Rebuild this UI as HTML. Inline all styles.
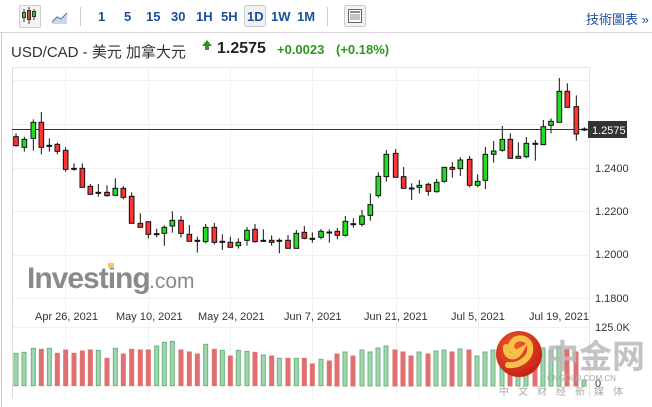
<!DOCTYPE html>
<html><head><meta charset="utf-8"><style>
body{margin:0;width:652px;height:407px;overflow:hidden;background:#fff;font-family:"Liberation Sans","Noto Sans CJK TC",sans-serif;position:relative}
.a{position:absolute;white-space:nowrap}
.tb{font-size:13px;font-weight:bold;color:#1a4f9c;top:9px}
</style></head><body>
<div class="a" style="left:0;top:0;width:652px;height:32px;border-bottom:1px solid #d6d6d6"></div>
<div class="a" style="left:19px;top:5px;width:20px;height:21px;border:1px solid #ccc;border-radius:2px;background:#f4f4f4"></div>
<svg class="a" style="left:0;top:0" width="652" height="32">
<g stroke="#333" stroke-width="1"><line x1="24" y1="9" x2="24" y2="22"/><line x1="29" y1="7" x2="29" y2="24"/><line x1="34" y1="9" x2="34" y2="20"/></g>
<rect x="22.5" y="12.5" width="3" height="5" fill="#3c3" stroke="#333"/><rect x="27.5" y="10.5" width="3" height="9" fill="#e33" stroke="#333"/><rect x="32.5" y="11.5" width="3" height="5" fill="#3c3" stroke="#333"/>
<path d="M52 22 L57 17 L61 19 L67 13 L67 24 L52 24Z" fill="#c9d6e8"/><path d="M52 22 L57 17 L61 19 L67 13" fill="none" stroke="#5b7fb8" stroke-width="1.2"/>
<line x1="80.5" y1="7" x2="80.5" y2="26" stroke="#ccc"/><line x1="327.5" y1="7" x2="327.5" y2="26" stroke="#ccc"/>
<rect x="244.5" y="5.5" width="21" height="21" fill="#f2f2f2" stroke="#ccc" rx="2"/>
<rect x="344.5" y="5.5" width="21" height="21" fill="#f4f4f4" stroke="#ccc" rx="2"/>
<rect x="348.5" y="9.5" width="13" height="13" fill="#fff" stroke="#666"/><line x1="350" y1="12" x2="360" y2="12" stroke="#666" stroke-width="1.5"/><g stroke="#888"><line x1="350" y1="15" x2="360" y2="15"/><line x1="350" y1="17" x2="360" y2="17"/><line x1="350" y1="19" x2="360" y2="19"/></g>
</svg>
<div class="a tb" style="left:98px">1</div><div class="a tb" style="left:124px">5</div><div class="a tb" style="left:146px">15</div><div class="a tb" style="left:171px">30</div><div class="a tb" style="left:196px">1H</div><div class="a tb" style="left:221px">5H</div><div class="a tb" style="left:247px">1D</div><div class="a tb" style="left:271px">1W</div><div class="a tb" style="left:297px">1M</div>
<div class="a" style="left:586px;top:9px;font-size:13px;color:#1a4f9c">技術圖表 »</div>
<div class="a" style="left:11px;top:41px;font-size:15px;color:#333">USD/CAD - 美元 加拿大元</div>
<svg class="a" style="left:202px;top:40px" width="10" height="10"><path d="M5 0 L10 6 L7 6 L7 10 L3 10 L3 6 L0 6Z" fill="#2a9a1a"/></svg>
<div class="a" style="left:217px;top:40px;font-size:16px;font-weight:bold;color:#222">1.2575</div>
<div class="a" style="left:277px;top:42px;font-size:13px;font-weight:bold;color:#2a9a1a">+0.0023</div>
<div class="a" style="left:336px;top:42px;font-size:13px;font-weight:bold;color:#2a9a1a">(+0.18%)</div>
<svg class="a" style="left:0;top:0" width="652" height="407">
<g stroke="#f1f1f1" stroke-width="1">
<line x1="12" y1="80.5" x2="589" y2="80.5"/><line x1="12" y1="124.5" x2="589" y2="124.5"/><line x1="12" y1="168.5" x2="589" y2="168.5"/><line x1="12" y1="211.5" x2="589" y2="211.5"/><line x1="12" y1="255.5" x2="589" y2="255.5"/><line x1="12" y1="298.5" x2="589" y2="298.5"/><line x1="12" y1="327.5" x2="589" y2="327.5"/>
<line x1="65.5" y1="68" x2="65.5" y2="398"/><line x1="148.5" y1="68" x2="148.5" y2="398"/><line x1="230.5" y1="68" x2="230.5" y2="398"/><line x1="312.5" y1="68" x2="312.5" y2="398"/><line x1="396.5" y1="68" x2="396.5" y2="398"/><line x1="478.5" y1="68" x2="478.5" y2="398"/>
</g>
<line x1="12" y1="67.5" x2="589" y2="67.5" stroke="#e4e4e4"/>
<line x1="12.5" y1="67" x2="12.5" y2="398" stroke="#ddd"/>
<line x1="589.5" y1="67" x2="589.5" y2="398" stroke="#e4e4e4"/>
<line x1="1.5" y1="32" x2="1.5" y2="407" stroke="#ccc"/>
<text x="27" y="288" font-family="Liberation Sans,sans-serif" font-size="30" font-weight="bold" fill="#8a8a8a" letter-spacing="-1">Investing</text>
<text x="149" y="288" font-family="Liberation Sans,sans-serif" font-size="21" fill="#8a8a8a">.com</text>
<rect x="108" y="263" width="6" height="5" fill="#f5c56b"/>
<line x1="12" y1="129.5" x2="589" y2="129.5" stroke="#333"/>
<g transform="translate(0,70) scale(0.33333)" stroke="#111" stroke-width="3">
<line x1="48" y1="190" x2="48" y2="230"/><rect x="41" y="200" width="14" height="27" fill="#f33"/>
<line x1="73" y1="200" x2="73" y2="245"/><rect x="66" y="208" width="14" height="24" fill="#2d2"/>
<line x1="100" y1="148" x2="100" y2="242"/><rect x="93" y="157" width="14" height="48" fill="#2d2"/>
<line x1="124" y1="126" x2="124" y2="253"/><rect x="117" y="157" width="14" height="75" fill="#f33"/>
<line x1="148" y1="205" x2="148" y2="245"/><rect x="141" y="226" width="14" height="3" fill="#111"/>
<line x1="172" y1="218" x2="172" y2="253"/><rect x="165" y="223" width="14" height="21" fill="#f33"/>
<line x1="197" y1="232" x2="197" y2="305"/><rect x="190" y="241" width="14" height="57" fill="#f33"/>
<line x1="222" y1="280" x2="222" y2="302"/><rect x="215" y="295" width="14" height="3" fill="#111"/>
<line x1="247" y1="280" x2="247" y2="352"/><rect x="240" y="295" width="14" height="57" fill="#f33"/>
<line x1="271" y1="342" x2="271" y2="373"/><rect x="264" y="349" width="14" height="24" fill="#f33"/>
<line x1="295" y1="342" x2="295" y2="380"/><rect x="288" y="367" width="14" height="3" fill="#111"/>
<line x1="321" y1="346" x2="321" y2="380"/><rect x="314" y="367" width="14" height="10" fill="#f33"/>
<line x1="346" y1="325" x2="346" y2="376"/><rect x="339" y="355" width="14" height="21" fill="#2d2"/>
<line x1="370" y1="348" x2="370" y2="388"/><rect x="363" y="355" width="14" height="27" fill="#f33"/>
<line x1="395" y1="367" x2="395" y2="460"/><rect x="388" y="379" width="14" height="81" fill="#f33"/>
<line x1="421" y1="430" x2="421" y2="472"/><rect x="414" y="460" width="14" height="12" fill="#f33"/>
<line x1="445" y1="455" x2="445" y2="505"/><rect x="438" y="455" width="14" height="38" fill="#f33"/>
<line x1="470" y1="476" x2="470" y2="502"/><rect x="463" y="491" width="14" height="3" fill="#111"/>
<line x1="493" y1="466" x2="493" y2="527"/><rect x="486" y="472" width="14" height="18" fill="#2d2"/>
<line x1="517" y1="424" x2="517" y2="488"/><rect x="510" y="451" width="14" height="17" fill="#2d2"/>
<line x1="543" y1="438" x2="543" y2="503"/><rect x="536" y="451" width="14" height="39" fill="#f33"/>
<line x1="568" y1="465" x2="568" y2="514"/><rect x="561" y="493" width="14" height="21" fill="#f33"/>
<line x1="592" y1="500" x2="592" y2="548"/><rect x="585" y="511" width="14" height="3" fill="#111"/>
<line x1="617" y1="462" x2="617" y2="520"/><rect x="610" y="472" width="14" height="43" fill="#2d2"/>
<line x1="643" y1="459" x2="643" y2="523"/><rect x="636" y="472" width="14" height="45" fill="#f33"/>
<line x1="667" y1="493" x2="667" y2="540"/><rect x="660" y="514" width="14" height="3" fill="#111"/>
<line x1="691" y1="500" x2="691" y2="532"/><rect x="684" y="517" width="14" height="15" fill="#f33"/>
<line x1="715" y1="505" x2="715" y2="536"/><rect x="708" y="517" width="14" height="10" fill="#2d2"/>
<line x1="741" y1="471" x2="741" y2="527"/><rect x="734" y="481" width="14" height="30" fill="#2d2"/>
<line x1="765" y1="462" x2="765" y2="518"/><rect x="758" y="478" width="14" height="37" fill="#f33"/>
<line x1="790" y1="478" x2="790" y2="515"/><rect x="783" y="511" width="14" height="3" fill="#111"/>
<line x1="815" y1="496" x2="815" y2="527"/><rect x="808" y="511" width="14" height="6" fill="#f33"/>
<line x1="838" y1="505" x2="838" y2="550"/><rect x="831" y="511" width="14" height="3" fill="#111"/>
<line x1="864" y1="495" x2="864" y2="535"/><rect x="857" y="511" width="14" height="24" fill="#f33"/>
<line x1="889" y1="480" x2="889" y2="535"/><rect x="882" y="490" width="14" height="45" fill="#2d2"/>
<line x1="913" y1="468" x2="913" y2="508"/><rect x="906" y="487" width="14" height="18" fill="#f33"/>
<line x1="937" y1="487" x2="937" y2="518"/><rect x="930" y="505" width="14" height="3" fill="#111"/>
<line x1="963" y1="477" x2="963" y2="508"/><rect x="956" y="484" width="14" height="18" fill="#2d2"/>
</g>
<g transform="translate(320,70) scale(0.33333)" stroke="#111" stroke-width="3">
<line x1="28" y1="478" x2="28" y2="518"/><rect x="21" y="486" width="14" height="3" fill="#111"/>
<line x1="52" y1="474" x2="52" y2="508"/><rect x="45" y="484" width="14" height="12" fill="#f33"/>
<line x1="76" y1="438" x2="76" y2="500"/><rect x="69" y="454" width="14" height="42" fill="#2d2"/>
<line x1="100" y1="445" x2="100" y2="473"/><rect x="93" y="461" width="14" height="3" fill="#111"/>
<line x1="126" y1="420" x2="126" y2="470"/><rect x="119" y="438" width="14" height="25" fill="#2d2"/>
<line x1="151" y1="370" x2="151" y2="452"/><rect x="144" y="404" width="14" height="32" fill="#2d2"/>
<line x1="175" y1="307" x2="175" y2="383"/><rect x="168" y="319" width="14" height="58" fill="#2d2"/>
<line x1="199" y1="240" x2="199" y2="335"/><rect x="192" y="253" width="14" height="67" fill="#2d2"/>
<line x1="227" y1="237" x2="227" y2="322"/><rect x="220" y="250" width="14" height="72" fill="#f33"/>
<line x1="251" y1="291" x2="251" y2="355"/><rect x="244" y="320" width="14" height="35" fill="#f33"/>
<line x1="275" y1="340" x2="275" y2="390"/><rect x="268" y="354" width="14" height="3" fill="#111"/>
<line x1="298" y1="330" x2="298" y2="370"/><rect x="291" y="346" width="14" height="6" fill="#2d2"/>
<line x1="325" y1="338" x2="325" y2="377"/><rect x="318" y="343" width="14" height="21" fill="#f33"/>
<line x1="350" y1="327" x2="350" y2="368"/><rect x="343" y="337" width="14" height="28" fill="#2d2"/>
<line x1="373" y1="292" x2="373" y2="338"/><rect x="366" y="292" width="14" height="42" fill="#2d2"/>
<line x1="397" y1="276" x2="397" y2="323"/><rect x="390" y="292" width="14" height="6" fill="#f33"/>
<line x1="421" y1="262" x2="421" y2="318"/><rect x="414" y="270" width="14" height="26" fill="#2d2"/>
<line x1="449" y1="258" x2="449" y2="352"/><rect x="442" y="268" width="14" height="78" fill="#f33"/>
<line x1="473" y1="313" x2="473" y2="352"/><rect x="466" y="334" width="14" height="12" fill="#2d2"/>
<line x1="496" y1="231" x2="496" y2="357"/><rect x="489" y="253" width="14" height="78" fill="#2d2"/>
<line x1="521" y1="213" x2="521" y2="278"/><rect x="514" y="243" width="14" height="10" fill="#2d2"/>
<line x1="547" y1="168" x2="547" y2="245"/><rect x="540" y="208" width="14" height="33" fill="#2d2"/>
<line x1="571" y1="190" x2="571" y2="265"/><rect x="564" y="208" width="14" height="57" fill="#f33"/>
<line x1="595" y1="217" x2="595" y2="265"/><rect x="588" y="259" width="14" height="6" fill="#2d2"/>
<line x1="619" y1="201" x2="619" y2="265"/><rect x="612" y="220" width="14" height="40" fill="#2d2"/>
<line x1="646" y1="210" x2="646" y2="272"/><rect x="639" y="220" width="14" height="3" fill="#111"/>
<line x1="670" y1="150" x2="670" y2="224"/><rect x="663" y="170" width="14" height="54" fill="#2d2"/>
<line x1="693" y1="145" x2="693" y2="190"/><rect x="686" y="154" width="14" height="12" fill="#2d2"/>
<line x1="718" y1="24" x2="718" y2="157"/><rect x="711" y="64" width="14" height="93" fill="#2d2"/>
<line x1="742" y1="40" x2="742" y2="112"/><rect x="735" y="64" width="14" height="48" fill="#f33"/>
<line x1="769" y1="76" x2="769" y2="212"/><rect x="762" y="110" width="14" height="82" fill="#f33"/>
<line x1="793" y1="172" x2="793" y2="183"/><rect x="786" y="177" width="14" height="3" fill="#111"/>
</g>
<rect x="588" y="121" width="39" height="17" fill="#333"/>
<text x="592" y="134" font-family="Liberation Sans,sans-serif" font-size="11" fill="#fff">1.2575</text>
<g font-family="Liberation Sans,sans-serif" font-size="11" fill="#333">
<text x="595" y="172">1.2400</text><text x="595" y="215">1.2200</text><text x="595" y="258">1.2000</text><text x="595" y="302">1.1800</text>
<text x="595" y="331">125.0K</text><text x="595" y="387">0</text>
<text x="35" y="320">Apr 26, 2021</text><text x="116" y="320">May 10, 2021</text><text x="198" y="320">May 24, 2021</text><text x="284" y="320">Jun 7, 2021</text><text x="364" y="320">Jun 21, 2021</text><text x="451" y="320">Jul 5, 2021</text><text x="529" y="320">Jul 19, 2021</text>
</g>
<g transform="translate(0,255) scale(0.33333)" stroke-width="3">
<g fill="#9fd6ae" stroke="#6db17f">
<rect x="42" y="295" width="12" height="97"/><rect x="66" y="292" width="12" height="100"/><rect x="94" y="280" width="12" height="112"/><rect x="142" y="280" width="12" height="112"/><rect x="289" y="286" width="12" height="106"/><rect x="340" y="280" width="12" height="112"/><rect x="464" y="273" width="12" height="119"/><rect x="487" y="262" width="12" height="130"/><rect x="511" y="259" width="12" height="133"/><rect x="611" y="268" width="12" height="124"/><rect x="661" y="286" width="12" height="106"/><rect x="709" y="286" width="12" height="106"/><rect x="735" y="289" width="12" height="103"/><rect x="784" y="300" width="12" height="92"/><rect x="832" y="310" width="12" height="82"/><rect x="883" y="310" width="12" height="82"/><rect x="957" y="313" width="12" height="79"/>
</g>
<g fill="#e07070" stroke="#e07070">
<rect x="118" y="283" width="12" height="109"/><rect x="166" y="295" width="12" height="97"/><rect x="191" y="285" width="12" height="107"/><rect x="216" y="295" width="12" height="97"/><rect x="241" y="288" width="12" height="104"/><rect x="265" y="285" width="12" height="107"/><rect x="315" y="310" width="12" height="82"/><rect x="364" y="297" width="12" height="95"/><rect x="389" y="283" width="12" height="109"/><rect x="415" y="285" width="12" height="107"/><rect x="439" y="285" width="12" height="107"/><rect x="537" y="285" width="12" height="107"/><rect x="562" y="291" width="12" height="101"/><rect x="586" y="297" width="12" height="95"/><rect x="637" y="283" width="12" height="109"/><rect x="685" y="303" width="12" height="89"/><rect x="759" y="292" width="12" height="100"/><rect x="809" y="303" width="12" height="89"/><rect x="858" y="310" width="12" height="82"/><rect x="907" y="310" width="12" height="82"/><rect x="931" y="327" width="12" height="65"/><rect x="982" y="318" width="12" height="74"/>
</g></g>
<g stroke-width="1">
<g fill="#9fd6ae" stroke="#6db17f">
<rect x="343" y="352" width="4" height="34"/><rect x="360" y="350" width="4" height="36"/><rect x="368" y="352" width="4" height="34"/><rect x="376" y="348" width="4" height="38"/><rect x="384" y="346" width="4" height="40"/><rect x="417" y="352" width="4" height="34"/><rect x="434" y="351" width="4" height="35"/><rect x="442" y="350" width="4" height="36"/><rect x="458" y="349" width="4" height="37"/><rect x="475" y="356" width="4" height="30"/><rect x="483" y="352" width="4" height="34"/><rect x="491" y="350" width="4" height="36"/><rect x="500" y="348" width="4" height="38"/><rect x="516" y="352" width="4" height="34"/><rect x="524" y="350" width="4" height="36"/><rect x="541" y="348" width="4" height="38"/><rect x="549" y="350" width="4" height="36"/><rect x="557" y="346" width="4" height="40"/><rect x="582" y="380" width="4" height="6"/>
</g>
<g fill="#e07070" stroke="#e07070">
<rect x="335" y="354" width="4" height="32"/><rect x="351" y="356" width="4" height="30"/><rect x="393" y="350" width="4" height="36"/><rect x="401" y="352" width="4" height="34"/><rect x="409" y="356" width="4" height="30"/><rect x="426" y="354" width="4" height="32"/><rect x="450" y="352" width="4" height="34"/><rect x="467" y="350" width="4" height="36"/><rect x="508" y="346" width="4" height="40"/><rect x="533" y="356" width="4" height="30"/><rect x="565" y="349" width="4" height="37"/><rect x="574" y="352" width="4" height="34"/>
</g></g>
<defs><radialGradient id="rg" cx="40%" cy="35%" r="70%"><stop offset="0" stop-color="#f05a2a"/><stop offset="1" stop-color="#c41e14"/></radialGradient></defs>
<circle cx="519" cy="354" r="23" fill="url(#rg)"/>
<path d="M508 365 C520 366 532 358 530 346 C528 337 516 336 512 343 C509 349 515 354 520 351 C515 360 505 357 506 347" fill="none" stroke="#f8c04a" stroke-width="6" stroke-linecap="round"/>
<text x="546" y="368" font-family="Noto Sans CJK SC,sans-serif" font-size="33" font-weight="bold" fill="#b8b8b8" fill-opacity="0.85">中金网</text>
<text x="547" y="381" font-family="Liberation Sans,sans-serif" font-size="8" fill="#aaa">CNGOLD.COM.CN</text>
<text x="499" y="395" font-family="Noto Sans CJK SC,sans-serif" font-size="10" fill="#aaa" letter-spacing="9">中文财经新媒体</text>
</svg>
</body></html>
